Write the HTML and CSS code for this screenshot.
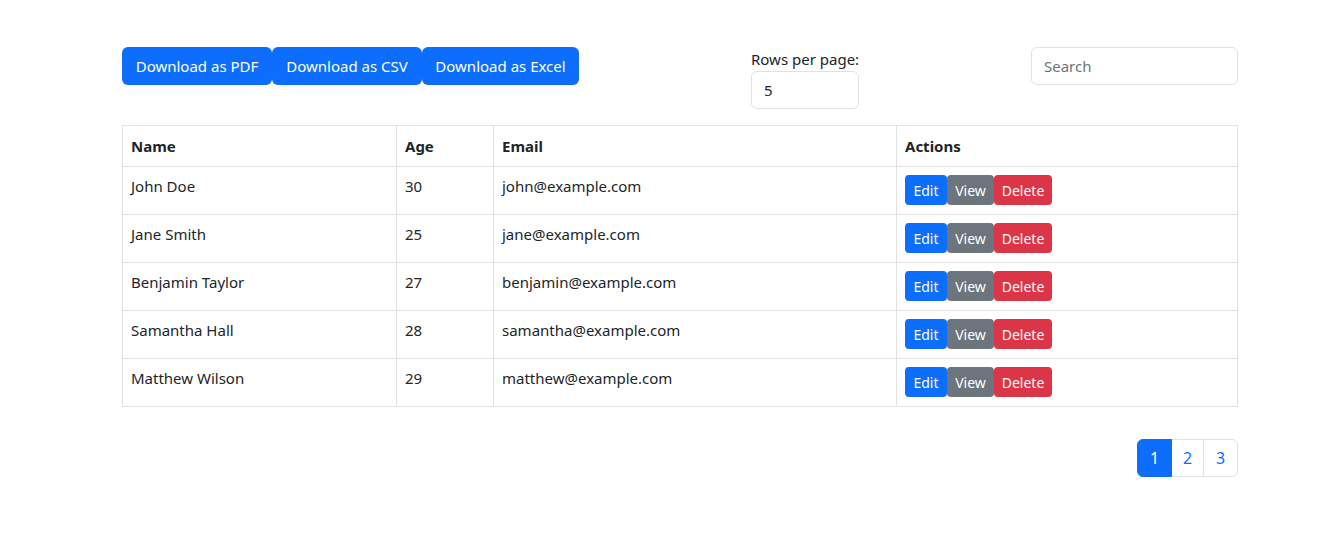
FILE: index.html
```html
<!DOCTYPE html>
<html>
<head>
<meta charset="utf-8">
<link rel="stylesheet" href="styles.css">
</head>
<body>
<div class="container">
  <div class="toolbar">
    <div class="downloads">
      <button class="btn btn-primary">Download as PDF</button>
      <button class="btn btn-primary">Download as CSV</button>
      <button class="btn btn-primary">Download as Excel</button>
    </div>
    <div class="rows">
      <label class="rows-label">Rows per page:</label>
      <div class="select">5</div>
    </div>
    <div class="search">Search</div>
  </div>
  <table class="table">
    <thead>
      <tr><th class="c-name">Name</th><th class="c-age">Age</th><th class="c-email">Email</th><th>Actions</th></tr>
    </thead>
    <tbody>
      <tr><td>John Doe</td><td>30</td><td>john@example.com</td><td><div class="actions"><button class="sm edit">Edit</button><button class="sm view">View</button><button class="sm del">Delete</button></div></td></tr>
      <tr><td>Jane Smith</td><td>25</td><td>jane@example.com</td><td><div class="actions"><button class="sm edit">Edit</button><button class="sm view">View</button><button class="sm del">Delete</button></div></td></tr>
      <tr><td>Benjamin Taylor</td><td>27</td><td>benjamin@example.com</td><td><div class="actions"><button class="sm edit">Edit</button><button class="sm view">View</button><button class="sm del">Delete</button></div></td></tr>
      <tr><td>Samantha Hall</td><td>28</td><td>samantha@example.com</td><td><div class="actions"><button class="sm edit">Edit</button><button class="sm view">View</button><button class="sm del">Delete</button></div></td></tr>
      <tr><td>Matthew Wilson</td><td>29</td><td>matthew@example.com</td><td><div class="actions"><button class="sm edit">Edit</button><button class="sm view">View</button><button class="sm del">Delete</button></div></td></tr>
    </tbody>
  </table>
  <div class="pager">
    <span class="page active">1</span><span class="page">2</span><span class="page">3</span>
  </div>
</div>
</body>
</html>
```
FILE: styles.css
```css
* { box-sizing: border-box; }
html, body { margin: 0; padding: 0; background: #fff; }
body {
  font-family: "Noto Sans", "Open Sans", sans-serif;
  font-size: 15px;
  line-height: 24px;
  color: #212529;
}
.container {
  width: 1116px;
  margin-left: 122px;
  padding-top: 47px;
}
.toolbar {
  display: flex;
  align-items: flex-start;
  height: 78px;
}
.downloads { display: flex; width: 629px; }
.btn {
  font: inherit;
  font-size: 15px;
  border: none;
  color: #fff;
  height: 38px;
  padding: 0;
  white-space: nowrap;
  border-radius: 6px;
  cursor: pointer;
}
.btn-primary { background: #0d6efd; }
.downloads .btn:nth-child(1) { width: 150px; }
.downloads .btn:nth-child(2) { width: 150px; }
.downloads .btn:nth-child(3) { width: 157px; }
.rows { display: flex; flex-direction: column; width: 280px; }
.rows-label { line-height: 24px; height: 24px; }
.select {
  width: 108px;
  height: 38px;
  border: 1px solid #dee2e6;
  border-radius: 6px;
  padding: 6px 12px;
  line-height: 24px;
}
.search {
  width: 207px;
  height: 38px;
  border: 1px solid #dee2e6;
  border-radius: 6px;
  padding: 6px 12px;
  line-height: 24px;
  color: #6c757d;
}
.table {
  width: 1116px;
  border-collapse: collapse;
  table-layout: fixed;
}
.table th, .table td {
  border: 1px solid #dee2e6;
  padding: 7px 8px 8px;
  text-align: left;
  vertical-align: top;
  line-height: 24px;
}
.table th { font-weight: 700; height: 41px; padding-top: 8px; }
.table td { height: 48px; }
.c-name { width: 274px; }
.c-age { width: 97px; }
.c-email { width: 403px; }
.actions { display: flex; margin-top: 1px; }
.sm {
  font: inherit;
  font-size: 14px;
  line-height: 21px;
  border: none;
  color: #fff;
  height: 30px;
  padding: 0;
  white-space: nowrap;
  border-radius: 4px;
}
.edit { background: #0d6efd; width: 42px; }
.view { background: #6c757d; width: 47px; }
.del { background: #dc3545; width: 58px; }
.pager {
  display: flex;
  justify-content: flex-end;
  margin-top: 32px;
}
.page {
  display: inline-block;
  height: 38px;
  line-height: 36px;
  border: 1px solid #dee2e6;
  color: #0d6efd;
  text-align: center;
  width: 33px;
  margin-left: -1px;
  font-size: 16px;
}
.page:first-child { width: 35px; border-radius: 6px 0 0 6px; }
.page:last-child { width: 35px; border-radius: 0 6px 6px 0; }
.page.active { background: #0d6efd; border-color: #0d6efd; color: #fff; position: relative; }
```
